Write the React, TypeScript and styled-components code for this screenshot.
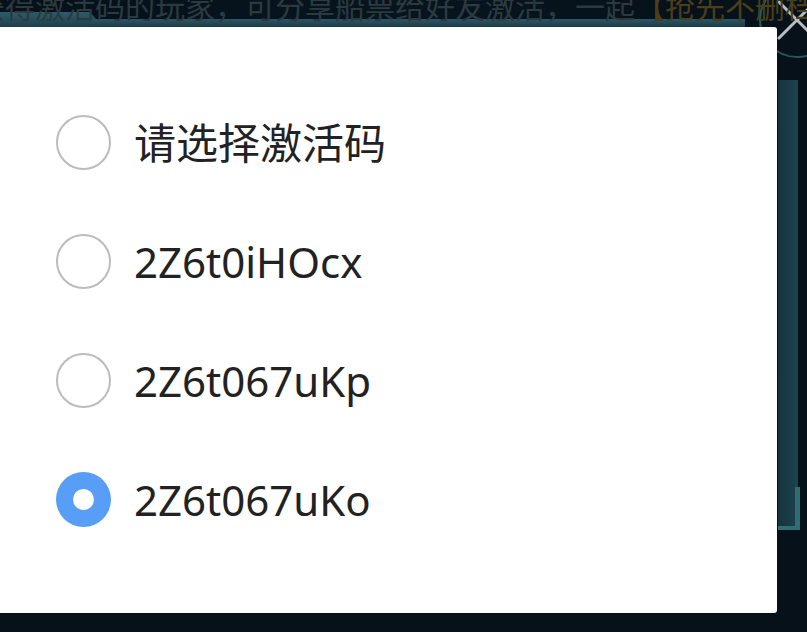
import React from "react";
import styled, { createGlobalStyle } from "styled-components";

const Global = createGlobalStyle`
  html, body { margin: 0; padding: 0; }
  body {
    width: 807px;
    height: 632px;
    overflow: hidden;
    background: #06111a;
    font-family: "Noto Sans", "Noto Sans CJK SC", sans-serif;
  }
`;

const Backdrop = styled.div`
  position: relative;
  width: 807px;
  height: 632px;
  overflow: hidden;
  background: radial-gradient(ellipse at 50% 40%, #0a1a22 0%, #06111a 70%);
`;

const Header = styled.div`
  position: relative;
  height: 27px;
  display: flex;
  align-items: flex-start;
  &::before {
    content: "";
    position: absolute;
    left: 0;
    top: 12px;
    width: 96px;
    height: 15px;
    background: linear-gradient(#2d5c6a, #1f3f4a);
    clip-path: polygon(0 0, 90px 0, 96px 7px, 96px 15px, 0 15px);
  }
  &::after {
    content: "";
    position: absolute;
    left: 90px;
    top: 19px;
    width: 655px;
    height: 8px;
    background: linear-gradient(#2a5766, #1d3a45);
  }
`;

const HeaderText = styled.div`
  position: relative;
  z-index: 1;
  margin: -10px 0 0 -25px;
  white-space: nowrap;
  font-size: 30px;
  line-height: 30px;
  color: #2c3a40;
  font-family: "Noto Sans CJK SC", sans-serif;
`;

const Gold = styled.span`
  color: #4a3f1a;
`;

const Body = styled.div`
  display: flex;
  justify-content: flex-end;
  padding-right: 9px;
`;

const SidePanel = styled.div`
  position: relative;
  margin-top: 53px;
  width: 20px;
  height: 450px;
  background: linear-gradient(90deg, #17333d, #1c4250);
  &::after {
    content: "";
    position: absolute;
    right: -2px;
    bottom: 0;
    width: 22px;
    height: 43px;
    border-right: 5px solid #2f6e72;
    border-bottom: 4px solid #2f6e72;
    box-sizing: border-box;
  }
`;

const CloseButton = styled.div`
  position: absolute;
  left: 759px;
  top: -18px;
  width: 76px;
  height: 76px;
  border-radius: 50%;
  border: 2px solid #1f5a5e;
  box-sizing: border-box;
  display: flex;
  align-items: center;
  justify-content: center;
`;

const Dialog = styled.div`
  position: absolute;
  left: 0;
  top: 27px;
  width: 777px;
  height: 586px;
  background: #ffffff;
  border-radius: 0 3px 3px 0;
  box-sizing: border-box;
  padding-top: 56px;
  display: flex;
  flex-direction: column;
`;

const Option = styled.label`
  height: 119px;
  display: flex;
  align-items: center;
  padding-left: 56px;
  gap: 23px;
  cursor: pointer;
`;

const Radio = styled.span<{ $checked?: boolean }>`
  flex: none;
  width: 55px;
  height: 55px;
  border-radius: 50%;
  box-sizing: border-box;
  border: ${(p) => (p.$checked ? "none" : "2px solid #bcbcbc")};
  background: ${(p) => (p.$checked ? "#589ef7" : "#ffffff")};
  display: flex;
  align-items: center;
  justify-content: center;
  &::after {
    content: "";
    display: ${(p) => (p.$checked ? "block" : "none")};
    width: 21px;
    height: 21px;
    border-radius: 50%;
    background: #ffffff;
  }
`;

const OptionText = styled.span`
  font-size: 42px;
  line-height: 1;
  color: #222222;
  font-family: "Noto Sans", "Noto Sans CJK SC", sans-serif;
`;

const options = ["请选择激活码", "2Z6t0iHOcx", "2Z6t067uKp", "2Z6t067uKo"];

export default function App() {
  const [selected, setSelected] = React.useState(3);
  return (
    <>
      <Global />
      <Backdrop>
        <Header>
          <HeaderText>
            获得激活码的玩家，可分享船票给好友激活，一起<Gold>【抢先不删档】</Gold>
          </HeaderText>
        </Header>
        <Body>
          <SidePanel />
        </Body>
        <CloseButton>
          <svg width="48" height="48" viewBox="0 0 48 48">
            <path d="M6 6 L42 42 M42 6 L6 42" stroke="#b9bfc1" strokeWidth="3" strokeLinecap="round" />
          </svg>
        </CloseButton>
        <Dialog>
          {options.map((o, i) => (
            <Option key={o} onClick={() => setSelected(i)}>
              <Radio $checked={selected === i} />
              <OptionText>{o}</OptionText>
            </Option>
          ))}
        </Dialog>
      </Backdrop>
    </>
  );
}
